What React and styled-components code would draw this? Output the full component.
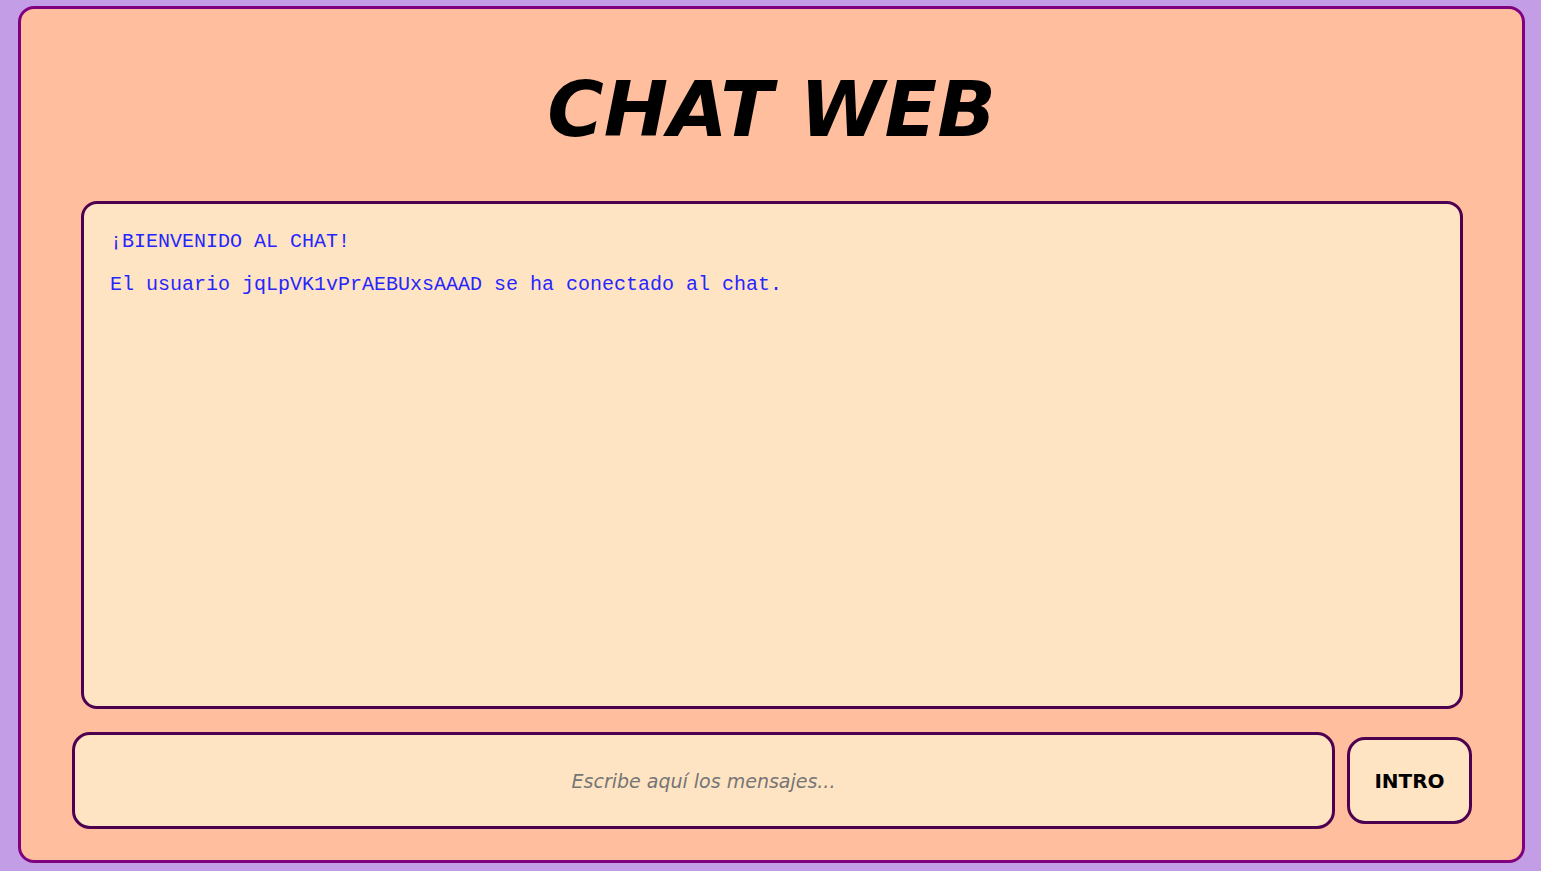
import React from "react";
import styled, { createGlobalStyle } from "styled-components";

const GlobalStyle = createGlobalStyle`
	html, body {
		margin: 0;
		padding: 0;
		background-color: #c39ee6;
		height: 100%;
	}
	#root {
		height: 100%;
	}
`;

const Page = styled.div`
	box-sizing: border-box;
	height: 871px;
	padding: 6px 16px 8px 18px;
`;

const Card = styled.main`
	box-sizing: border-box;
	display: flex;
	flex-direction: column;
	height: 100%;
	border: 3px solid #800080;
	border-radius: 16px;
	background-color: #ffbf9f;
`;

const Title = styled.h1`
	margin: 0;
	padding: 62px 0 52px;
	text-align: center;
	font-family: "DejaVu Sans", Verdana, sans-serif;
	font-style: italic;
	font-weight: bold;
	font-size: 77px;
	line-height: 78px;
	color: #000;
`;

const Messages = styled.ul`
	box-sizing: border-box;
	list-style: none;
	margin: 0 59px 0 60px;
	padding: 26px 26px 24px;
	height: 508px;
	border: 3px solid #4d0050;
	border-radius: 16px;
	background-color: #ffe4c4;
	font-family: "Liberation Mono", "Courier New", monospace;
	font-size: 20px;
	color: #2626ff;
`;

const Message = styled.li`
	line-height: 23px;
	margin-bottom: 20px;
`;

const InputRow = styled.form`
	display: flex;
	align-items: center;
	gap: 12px;
	margin: 23px 50px 0 51px;
`;

const MessageInput = styled.input`
	box-sizing: border-box;
	flex: 1;
	height: 97px;
	border: 3px solid #4d0050;
	border-radius: 18px;
	background-color: #ffe4c4;
	text-align: center;
	font-family: "DejaVu Sans", Verdana, sans-serif;
	font-size: 19px;
	outline: none;
	&::placeholder {
		color: #757575;
		font-style: italic;
	}
`;

const SendButton = styled.button`
	box-sizing: border-box;
	width: 125px;
	height: 87px;
	border: 3px solid #4d0050;
	border-radius: 18px;
	background-color: #ffe4c4;
	font-family: "DejaVu Sans", Verdana, sans-serif;
	font-weight: bold;
	font-size: 20px;
	color: #000;
	cursor: pointer;
`;

const App = () => {
	return (
		<>
			<GlobalStyle />
			<Page>
				<Card>
					<Title>CHAT WEB</Title>
					<Messages>
						<Message>¡BIENVENIDO AL CHAT!</Message>
						<Message>El usuario jqLpVK1vPrAEBUxsAAAD se ha conectado al chat.</Message>
					</Messages>
					<InputRow onSubmit={(e) => e.preventDefault()}>
						<MessageInput placeholder="Escribe aquí los mensajes..." />
						<SendButton type="submit">INTRO</SendButton>
					</InputRow>
				</Card>
			</Page>
		</>
	);
};

export default App;
